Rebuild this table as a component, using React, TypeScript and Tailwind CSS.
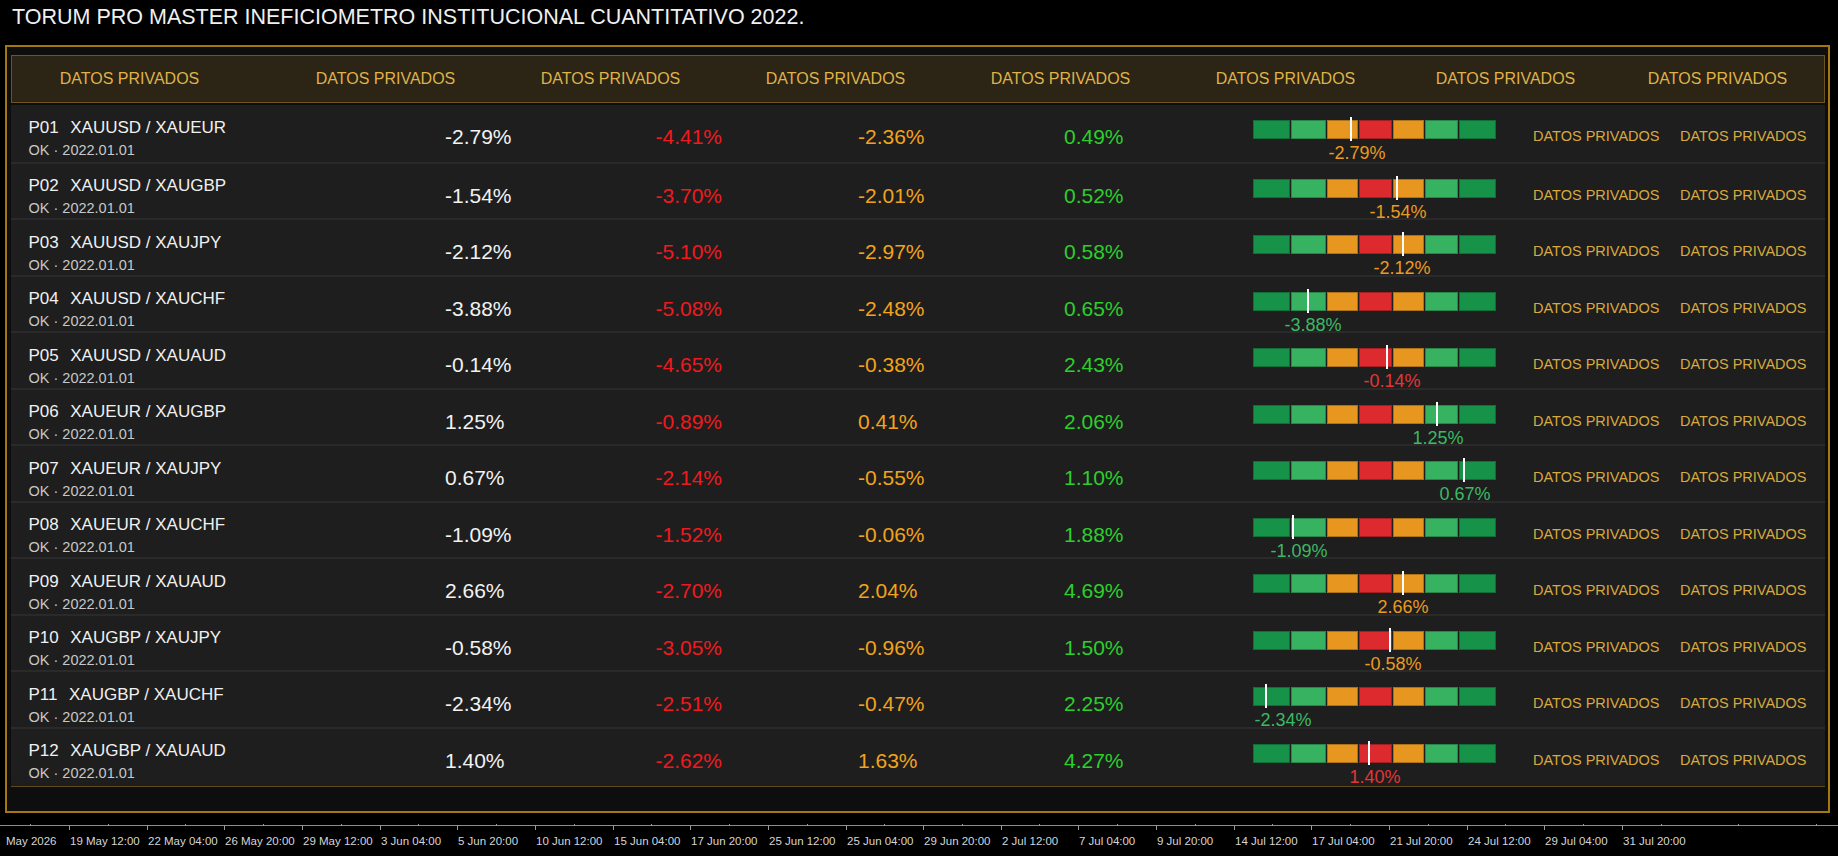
import React from 'react';

type Tone = 'o' | 'g' | 'r';

const rows: {
    id: string;
    pair: string;
    a: string;
    b: string;
    c: string;
    d: string;
    mark: number;
    label: number;
    tone: Tone;
}[] = [
    { id: 'P01', pair: 'XAUUSD / XAUEUR', a: '-2.79%', b: '-4.41%', c: '-2.36%', d: '0.49%', mark: 98, label: 104, tone: 'o' },
    { id: 'P02', pair: 'XAUUSD / XAUGBP', a: '-1.54%', b: '-3.70%', c: '-2.01%', d: '0.52%', mark: 144, label: 145, tone: 'o' },
    { id: 'P03', pair: 'XAUUSD / XAUJPY', a: '-2.12%', b: '-5.10%', c: '-2.97%', d: '0.58%', mark: 150, label: 149, tone: 'o' },
    { id: 'P04', pair: 'XAUUSD / XAUCHF', a: '-3.88%', b: '-5.08%', c: '-2.48%', d: '0.65%', mark: 55, label: 60, tone: 'g' },
    { id: 'P05', pair: 'XAUUSD / XAUAUD', a: '-0.14%', b: '-4.65%', c: '-0.38%', d: '2.43%', mark: 134, label: 139, tone: 'r' },
    { id: 'P06', pair: 'XAUEUR / XAUGBP', a: '1.25%', b: '-0.89%', c: '0.41%', d: '2.06%', mark: 184, label: 185, tone: 'g' },
    { id: 'P07', pair: 'XAUEUR / XAUJPY', a: '0.67%', b: '-2.14%', c: '-0.55%', d: '1.10%', mark: 211, label: 212, tone: 'g' },
    { id: 'P08', pair: 'XAUEUR / XAUCHF', a: '-1.09%', b: '-1.52%', c: '-0.06%', d: '1.88%', mark: 40, label: 46, tone: 'g' },
    { id: 'P09', pair: 'XAUEUR / XAUAUD', a: '2.66%', b: '-2.70%', c: '2.04%', d: '4.69%', mark: 150, label: 150, tone: 'o' },
    { id: 'P10', pair: 'XAUGBP / XAUJPY', a: '-0.58%', b: '-3.05%', c: '-0.96%', d: '1.50%', mark: 137, label: 140, tone: 'o' },
    { id: 'P11', pair: 'XAUGBP / XAUCHF', a: '-2.34%', b: '-2.51%', c: '-0.47%', d: '2.25%', mark: 13, label: 30, tone: 'g' },
    { id: 'P12', pair: 'XAUGBP / XAUAUD', a: '1.40%', b: '-2.62%', c: '1.63%', d: '4.27%', mark: 116, label: 122, tone: 'r' },
];

const toneClass: Record<Tone, string> = {
    o: 'text-[#ea9a20]',
    g: 'text-[#3db864]',
    r: 'text-[#e23636]',
};

// header label gaps (px before each 160px cell)
const headerGaps = ['ml-[38px]', 'ml-[96px]', 'ml-[65px]', 'ml-[65px]', 'ml-[65px]', 'ml-[65px]', 'ml-[60px]', 'ml-[52px]'];

const segments = [
    'w-[37px] bg-[#179349]',
    'w-[35px] bg-[#37b260]',
    'w-[31px] bg-[#e7971f]',
    'w-[33px] bg-[#dc2a2e]',
    'w-[31px] bg-[#e7971f]',
    'w-[33px] bg-[#37b260]',
    'w-[37px] bg-[#179349]',
];

const axisLabels = [
    '19 May 12:00', '22 May 04:00', '26 May 20:00', '29 May 12:00', '3 Jun 04:00', '5 Jun 20:00',
    '10 Jun 12:00', '15 Jun 04:00', '17 Jun 20:00', '25 Jun 12:00', '25 Jun 04:00', '29 Jun 20:00',
    '2 Jul 12:00', '7 Jul 04:00', '9 Jul 20:00', '14 Jul 12:00', '17 Jul 04:00', '21 Jul 20:00',
    '24 Jul 12:00', '29 Jul 04:00', '31 Jul 20:00',
];

function Gauge({ mark, label, value, tone }: { mark: number; label: number; value: string; tone: Tone }) {
    return (
        <div className="relative w-[243px] h-full">
            <div className="flex gap-[1px] mt-[15px] h-[19px]">
                {segments.map((s, i) => (
                    <div key={i} className={`${s} h-full border border-black/25`} />
                ))}
            </div>
            <div className="absolute top-[12px] w-[2px] h-[24px] bg-white" style={{ left: mark - 1 }} />
            <div
                className={`absolute top-[38px] -translate-x-1/2 text-[18px] leading-[20px] whitespace-nowrap ${toneClass[tone]}`}
                style={{ left: label }}
            >
                {value}
            </div>
        </div>
    );
}

export default function App() {
    return (
        <div className="w-[1838px] h-[856px] bg-black overflow-hidden font-['Liberation_Sans',Arial,sans-serif]">
            {/* title */}
            <div className="h-[45px] pl-[12px] pt-[5px] text-[21.5px] leading-[24px] text-[#f0f0f0] whitespace-nowrap">
                TORUM PRO MASTER INEFICIOMETRO INSTITUCIONAL CUANTITATIVO 2022.
            </div>

            {/* framed panel */}
            <div className="ml-[5px] w-[1825px] h-[768px] border-2 border-[#a5780f] bg-[#0e0e0e] pl-[3.5px] pr-[3px] pt-[8px]">
                <div className="h-[48px] flex items-center border border-[#6d5522] bg-[#2c2414] text-[16px] text-[#dfb24a] whitespace-nowrap">
                    {headerGaps.map((g, i) => (
                        <div key={i} className={`${g} w-[160px] text-center`}>
                            DATOS PRIVADOS
                        </div>
                    ))}
                </div>

                <div className="mt-[2px] bg-[#1d1d1d] border-b border-[#5c4a1d] pb-[3px]">
                    {rows.map((r, idx) => (
                        <div
                            key={r.id}
                            className={`flex h-[56.5px] bg-[#1e1e1e] ${idx > 0 ? 'border-t-2 border-[#2a2a2a]' : ''}`}
                        >
                            <div className="w-[434.5px] pl-[18px] pt-[12.5px]">
                                <div className="flex text-[17px] leading-[20px] text-[#f0f0f0] whitespace-nowrap">
                                    <span>{r.id}</span>
                                    <span className="ml-[11.5px]">{r.pair}</span>
                                </div>
                                <div className="mt-[3px] text-[14.5px] leading-[18px] text-[#c8c8c8] whitespace-nowrap">
                                    OK · 2022.01.01
                                </div>
                            </div>
                            <div className="w-[155px] pt-[20px] text-[21px] leading-[24px] text-[#f2f2f2]">{r.a}</div>
                            <div className="w-[122px] pt-[20px] text-[21px] leading-[24px] text-right text-[#f01a1e]">{r.b}</div>
                            <div className="ml-[136px] w-[206px] pt-[20px] text-[21px] leading-[24px] text-[#f2a31c]">{r.c}</div>
                            <div className="w-[189px] pt-[20px] text-[21px] leading-[24px] text-[#2ccf2c]">{r.d}</div>
                            <Gauge mark={r.mark} label={r.label} value={r.a} tone={r.tone} />
                            <div className="ml-[37px] w-[147px] pt-[22px] text-[14.5px] leading-[18px] text-[#d8a93e] whitespace-nowrap">
                                DATOS PRIVADOS
                            </div>
                            <div className="flex-1 pt-[22px] text-[14.5px] leading-[18px] text-[#d8a93e] whitespace-nowrap">
                                DATOS PRIVADOS
                            </div>
                        </div>
                    ))}
                </div>
            </div>

            {/* time axis */}
            <div className="relative h-[43px]">
                <div className="absolute left-0 right-0 top-[12px] h-[1px] bg-[#8c8c8c]" />
                {Array.from({ length: 24 }).map((_, i) => (
                    <div
                        key={'s' + i}
                        className="absolute top-[11px] w-[1px] h-[2px] bg-[#9a9a9a]"
                        style={{ left: Math.round(30 + i * 77.65) }}
                    />
                ))}
                {axisLabels.map((t, i) => {
                    const x = Math.round(69 + i * 77.65);
                    return (
                        <React.Fragment key={t + i}>
                            <div className="absolute top-[12px] w-[1px] h-[5px] bg-[#9a9a9a]" style={{ left: x }} />
                            <div
                                className="absolute top-[21px] text-[11.5px] leading-[14px] text-[#d6d6d6] whitespace-nowrap"
                                style={{ left: x + 1 }}
                            >
                                {t}
                            </div>
                        </React.Fragment>
                    );
                })}
                <div className="absolute left-[6px] top-[21px] text-[11.5px] leading-[14px] text-[#d6d6d6] whitespace-nowrap">
                    May 2026
                </div>
            </div>
        </div>
    );
}
